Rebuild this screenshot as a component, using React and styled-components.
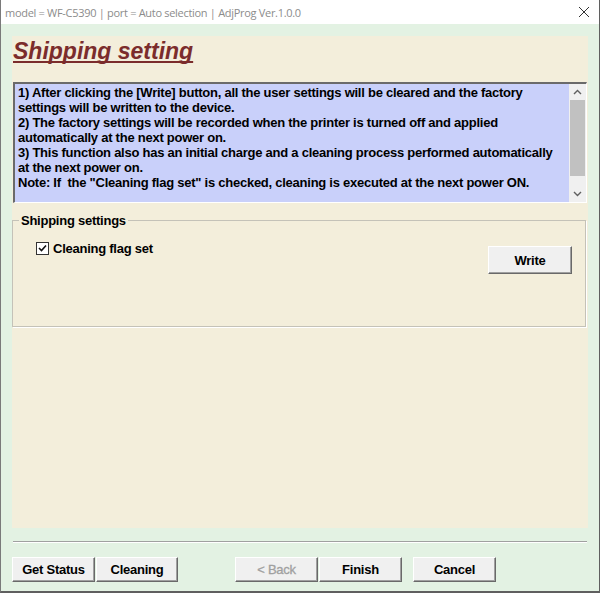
import React from 'react';
import styled, { createGlobalStyle } from 'styled-components';

const GlobalStyle = createGlobalStyle`
    html, body {
        margin: 0;
        padding: 0;
        background: #ffffff;
    }
    * {
        box-sizing: border-box;
    }
`

const infoLines = [
    '1) After clicking the [Write] button, all the user settings will be cleared and the factory',
    'settings will be written to the device.',
    '2) The factory settings will be recorded when the printer is turned off and applied',
    'automatically at the next power on.',
    '3) This function also has an initial charge and a cleaning process performed automatically',
    'at the next power on.',
    'Note: If  the "Cleaning flag set" is checked, cleaning is executed at the next power ON.',
];

export default function App() {
    return (
        <>
            <GlobalStyle />
            <Window>
                <TitleBar>
                    <TitleText>model = WF-C5390 | port = Auto selection | AdjProg Ver.1.0.0</TitleText>
                    <CloseIcon width="12" height="12" viewBox="0 0 12 12">
                        <path d="M1 1 L11 11 M11 1 L1 11" stroke="#333" strokeWidth="1" fill="none" />
                    </CloseIcon>
                </TitleBar>
                <Body>
                    <Panel>
                        <Heading>Shipping setting</Heading>
                        <InfoBox>
                            <InfoText>
                                {infoLines.map((line, i) => (
                                    <Line key={i}>{line}</Line>
                                ))}
                            </InfoText>
                            <ScrollBar>
                                <ScrollArrow>
                                    <svg width="9" height="6" viewBox="0 0 9 6">
                                        <path d="M1 5 L4.5 1.5 L8 5" stroke="#606060" strokeWidth="1.4" fill="none" />
                                    </svg>
                                </ScrollArrow>
                                <ScrollTrack>
                                    <Thumb />
                                </ScrollTrack>
                                <ScrollArrow>
                                    <svg width="9" height="6" viewBox="0 0 9 6">
                                        <path d="M1 1 L4.5 4.5 L8 1" stroke="#606060" strokeWidth="1.4" fill="none" />
                                    </svg>
                                </ScrollArrow>
                            </ScrollBar>
                        </InfoBox>
                        <Group>
                            <Legend>Shipping settings</Legend>
                            <GroupRow>
                                <CheckLabel>
                                    <CheckBox>
                                        <svg width="9" height="9" viewBox="0 0 9 9">
                                            <path d="M1 4 L3.5 6.5 L8 1.5" stroke="#111" strokeWidth="1.6" fill="none" />
                                        </svg>
                                    </CheckBox>
                                    Cleaning flag set
                                </CheckLabel>
                                <Button $w={84} $h={28}>Write</Button>
                            </GroupRow>
                        </Group>
                    </Panel>
                    <Separator />
                    <Footer>
                        <Button>Get Status</Button>
                        <Button $gap={1} $w={82}>Cleaning</Button>
                        <Button $gap={57}>
                            <Disabled>&lt; Back</Disabled>
                        </Button>
                        <Button $gap={1}>Finish</Button>
                        <Button $gap={11}>Cancel</Button>
                    </Footer>
                </Body>
            </Window>
        </>
    )
}

const Window = styled.div`
    width: 600px;
    height: 593px;
    display: flex;
    flex-direction: column;
    border-left: 1px solid #7a7a7a;
    border-right: 1px solid #5f5f5f;
    border-bottom: 2px solid #5f5f5f;
    background: #e3f2e3;
    font-family: "Liberation Sans", Arial, sans-serif;
    font-weight: bold;
    font-size: 13px;
    letter-spacing: -0.25px;
    color: #000;
`

const TitleBar = styled.div`
    height: 24px;
    flex: none;
    display: flex;
    align-items: center;
    justify-content: space-between;
    padding: 0 9px 0 4px;
    background: #ffffff;
`

const TitleText = styled.span`
    font-family: "Open Sans", "Noto Sans", sans-serif;
    font-weight: normal;
    font-size: 11px;
    color: #8c8c8c;
    letter-spacing: -0.3px;
`

const CloseIcon = styled.svg`
    display: block;
`

const Body = styled.div`
    flex: 1;
    display: flex;
    flex-direction: column;
    padding: 12px 11px 0 11px;
`

const Panel = styled.div`
    height: 492px;
    flex: none;
    display: flex;
    flex-direction: column;
    background: #f3eedb;
    padding: 0 1px;
`

const Heading = styled.h1`
    margin: 0;
    padding: 2px 0 17px 0;
    font-size: 23px;
    line-height: 27px;
    font-style: italic;
    font-weight: bold;
    letter-spacing: 0;
    color: #7b2c2c;
    text-decoration: underline;
    text-decoration-thickness: 2px;
    text-underline-offset: 2px;
    text-decoration-skip-ink: none;
`

const InfoBox = styled.div`
    height: 121px;
    display: flex;
    background: #c9d0fa;
    border-top: 2px solid #6a6a6a;
    border-left: 2px solid #6a6a6a;
    border-bottom: 1px solid #ffffff;
    border-right: 1px solid #ffffff;
`

const InfoText = styled.div`
    flex: 1;
    padding: 1px 0 0 3px;
    line-height: 15px;
    overflow: hidden;
`

const Line = styled.div`
    white-space: pre;
`

const ScrollBar = styled.div`
    width: 17px;
    display: flex;
    flex-direction: column;
    background: #f0f0f0;
`

const ScrollArrow = styled.div`
    height: 16px;
    display: flex;
    align-items: center;
    justify-content: center;
`

const ScrollTrack = styled.div`
    flex: 1;
    padding: 0 1px;
`

const Thumb = styled.div`
    height: 76px;
    background: #c1c1c1;
`

const Group = styled.fieldset`
    margin: 10px 1px 0 -1px;
    padding: 0;
    height: 114px;
    border: 1px solid #c4c2b8;
    box-shadow: 1px 1px 0 #ffffff;
`

const Legend = styled.legend`
    margin-left: 6px;
    padding: 0 2px;
    line-height: 15px;
`

const GroupRow = styled.div`
    display: flex;
    justify-content: space-between;
    align-items: flex-start;
    padding: 14px 13px 0 23px;
`

const CheckLabel = styled.label`
    display: flex;
    align-items: center;
    gap: 4px;
    line-height: 13px;
`

const CheckBox = styled.span`
    width: 13px;
    height: 13px;
    display: flex;
    align-items: center;
    justify-content: center;
    background: #ffffff;
    border: 1px solid #333333;
`

const Button = styled.button`
    width: ${p => p.$w || 83}px;
    height: ${p => p.$h || 25}px;
    margin: ${p => (p.$h ? '4px 0 0 0' : `0 0 0 ${p.$gap || 0}px`)};
    padding: 0;
    font-family: "Liberation Sans", Arial, sans-serif;
    font-weight: bold;
    font-size: 13px;
    letter-spacing: -0.25px;
    color: #000;
    background: #f0f0f0;
    border-top: 1px solid #ffffff;
    border-left: 1px solid #ffffff;
    border-right: 1px solid #696969;
    border-bottom: 1px solid #696969;
    box-shadow: inset -1px -1px 0 #a0a0a0;
`

const Disabled = styled.span`
    color: #a0a0a0;
    font-weight: normal;
    -webkit-text-stroke: 0.3px #a0a0a0;
`

const Separator = styled.div`
    margin: 13px 1px 0 1px;
    height: 2px;
    border-top: 1px solid #a0a0a0;
    border-bottom: 1px solid #ffffff;
`

const Footer = styled.div`
    display: flex;
    padding: 14px 0 0 0;
`
